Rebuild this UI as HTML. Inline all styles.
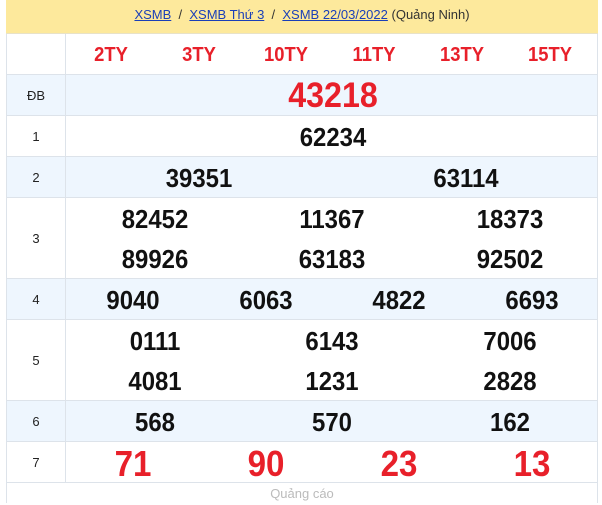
<!DOCTYPE html>
<html><head><meta charset="utf-8"><style>
*{margin:0;padding:0;box-sizing:border-box}
body{width:602px;height:501px;background:#fff;position:relative;overflow:hidden;font-family:"Liberation Sans",sans-serif}
.t{position:absolute;left:6px;width:592px;border-left:1px solid #dde3ea;border-right:1px solid #dde3ea}
.r{position:absolute;left:6px;width:592px;border-bottom:1px solid #dde3ea;border-left:1px solid #dde3ea;border-right:1px solid #dde3ea}
.b{background:#eef6fe}
.l{position:absolute;left:0;top:0;bottom:0;width:59px;border-right:1px solid #dde3ea;font-size:13px;color:#222;display:flex;align-items:center;justify-content:center}
.n{position:absolute;transform:translateX(-50%) scaleX(0.92);font-family:"Liberation Sans",sans-serif;font-weight:bold;font-size:26px;color:#111;white-space:nowrap;line-height:30px}
.red{color:#e8202a}
.h{font-size:20px;color:#e8202a}
a{color:#1a3fb8}
</style></head><body>
<div style="position:absolute;left:6px;top:0;width:592px;height:34px;background:#fde99c;border-bottom:1px solid #e8e2c8;text-align:center;font-size:13px;line-height:30px;color:#333"><a href="#">XSMB</a> &nbsp;/&nbsp; <a href="#">XSMB Thứ 3</a> &nbsp;/&nbsp; <a href="#">XSMB 22/03/2022</a> (Quảng Ninh)</div>

<div class="r" style="top:34px;height:41px"><div class="l"></div>
<div class="n h" style="left:104px;top:6px">2TY</div><div class="n h" style="left:192px;top:6px">3TY</div><div class="n h" style="left:279px;top:6px">10TY</div><div class="n h" style="left:367px;top:6px">11TY</div><div class="n h" style="left:455px;top:6px">13TY</div><div class="n h" style="left:543px;top:6px">15TY</div></div>

<div class="r b" style="top:75px;height:41px"><div class="l">ĐB</div><div class="n red" style="left:326px;top:6px;font-size:35px">43218</div></div>

<div class="r" style="top:116px;height:41px"><div class="l">1</div><div class="n" style="left:326px;top:6px">62234</div></div>

<div class="r b" style="top:157px;height:41px"><div class="l">2</div><div class="n" style="left:192px;top:6px">39351</div><div class="n" style="left:459px;top:6px">63114</div></div>

<div class="r" style="top:198px;height:81px"><div class="l">3</div>
<div class="n" style="left:148px;top:6px">82452</div><div class="n" style="left:325px;top:6px">11367</div><div class="n" style="left:503px;top:6px">18373</div>
<div class="n" style="left:148px;top:46px">89926</div><div class="n" style="left:325px;top:46px">63183</div><div class="n" style="left:503px;top:46px">92502</div></div>

<div class="r b" style="top:279px;height:41px"><div class="l">4</div>
<div class="n" style="left:126px;top:6px">9040</div><div class="n" style="left:259px;top:6px">6063</div><div class="n" style="left:392px;top:6px">4822</div><div class="n" style="left:525px;top:6px">6693</div></div>

<div class="r" style="top:320px;height:81px"><div class="l">5</div>
<div class="n" style="left:148px;top:6px">0111</div><div class="n" style="left:325px;top:6px">6143</div><div class="n" style="left:503px;top:6px">7006</div>
<div class="n" style="left:148px;top:46px">4081</div><div class="n" style="left:325px;top:46px">1231</div><div class="n" style="left:503px;top:46px">2828</div></div>

<div class="r b" style="top:401px;height:41px"><div class="l">6</div>
<div class="n" style="left:148px;top:6px">568</div><div class="n" style="left:325px;top:6px">570</div><div class="n" style="left:503px;top:6px">162</div></div>

<div class="r" style="top:442px;height:41px"><div class="l">7</div>
<div class="n red" style="left:126px;top:7px;font-size:36px">71</div><div class="n red" style="left:259px;top:7px;font-size:36px">90</div><div class="n red" style="left:392px;top:7px;font-size:36px">23</div><div class="n red" style="left:525px;top:7px;font-size:36px">13</div></div>

<div class="t" style="top:483px;height:20px;text-align:center;font-size:13px;color:#bbb;line-height:22px">Quảng cáo</div>
</body></html>
